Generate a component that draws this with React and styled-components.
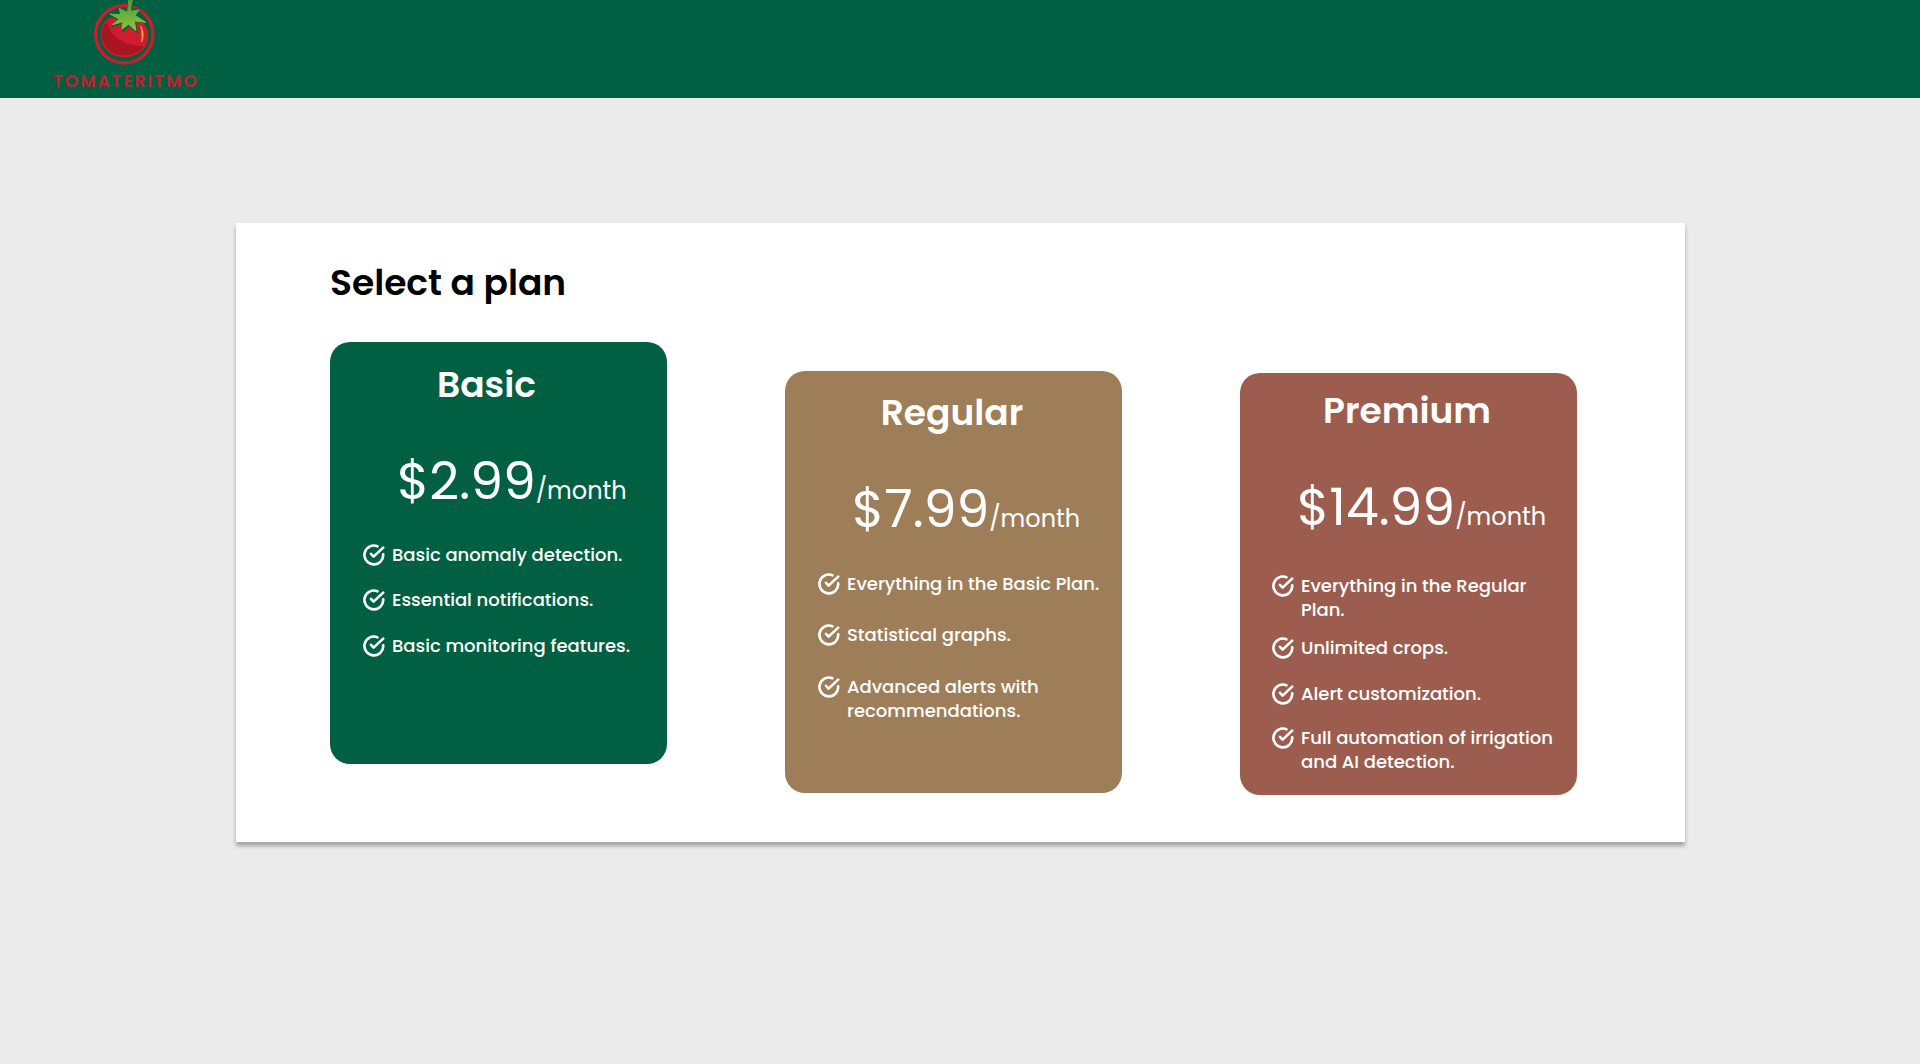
import React from "react";
import styled, { createGlobalStyle } from "styled-components";

const GlobalStyle = createGlobalStyle`
  *, *::before, *::after { box-sizing: border-box; }
  body {
    margin: 0;
    background: #ebebeb;
    color: #000;
    font-family: "Poppins", "Inter", sans-serif;
  }
`;

const Header = styled.header`
  display: flex;
  height: 98px;
  padding-left: 53px;
  background: #006041;
`;

const Brand = styled.a`
  display: flex;
  flex-direction: column;
  align-items: center;
  gap: 4px;
  color: #c41e2f;
  text-decoration: none;
`;

const Wordmark = styled.span`
  margin-right: -2px;
  font-size: 17px;
  font-weight: 600;
  line-height: 20px;
  letter-spacing: 2px;
`;

const Main = styled.main`
  padding: 125px 235px 125px 236px;
`;

const Panel = styled.section`
  padding: 36px 108px 47px 94px;
  background: #fff;
  box-shadow: 0 4px 4px rgba(0, 0, 0, 0.3);
`;

const Heading = styled.h1`
  margin: 0 0 35px;
  font-size: 36px;
  font-weight: 600;
  line-height: 48px;
`;

const Plans = styled.div`
  display: grid;
  grid-template-columns: repeat(3, 1fr);
  align-items: start;
  gap: 118px;
`;

const Card = styled.article`
  min-height: 422px;
  margin-top: ${(p) => p.$drop}px;
  border-radius: 20px;
  background: ${(p) => p.$color};
  color: #fff;
`;

const PlanName = styled.h2`
  margin: 0;
  padding: ${(p) => p.$top}px ${(p) => p.$shift}px 0 0;
  font-size: 36px;
  font-weight: 600;
  line-height: 48px;
  text-align: center;
`;

const Price = styled.p`
  margin: 0;
  padding: 32px 0 0 ${(p) => p.$indent}px;
  font-size: 52px;
  font-weight: 400;
  line-height: 80px;
  white-space: nowrap;
`;

const Period = styled.span`
  font-size: 24px;
`;

const Features = styled.ul`
  margin: 0;
  padding: ${(p) => p.$top}px 16px 16px ${(p) => p.$left}px;
  list-style: none;
`;

const Feature = styled.li`
  display: flex;
  gap: 7px;
  margin-top: ${(p) => p.$space}px;
  font-size: 18px;
  font-weight: 500;
  line-height: 24px;
`;

const Tick = styled.svg`
  flex: none;
  width: 22px;
  height: 24px;
`;

function TickIcon() {
  return (
    <Tick viewBox="0 0 22 24" fill="none" stroke="currentColor" strokeWidth="2.6" strokeLinecap="round" strokeLinejoin="round" aria-hidden="true">
      <path d="M20.2 11.2A9.4 9.4 0 1 1 14.4 3.3" />
      <path d="M8 10.8L10.6 13.6L20.2 4.6" />
    </Tick>
  );
}

function TomatoLogo() {
  return (
    <svg width="65" height="67" viewBox="36 0 195 201" aria-hidden="true">
      <defs>
        <linearGradient id="leaf" x1="0" y1="0" x2="0" y2="1">
          <stop offset="0" stopColor="#4f9a35" />
          <stop offset="1" stopColor="#8cc63f" />
        </linearGradient>
      </defs>
      <circle cx="133" cy="103" r="86" fill="none" stroke="#cf1b2e" strokeWidth="10" />
      <path d="M90 53C70 62 61 85 62 108C64 146 95 172 134 171C174 171 204 145 205 110C206 86 195 66 174 62C145 50 115 46 90 53Z" fill="#d11c2f" />
      <path d="M82 64C66 76 62 100 66 118C74 150 102 166 132 166C160 166 181 155 191 139C137 138 86 110 82 64Z" fill="#a81622" />
      <path d="M182 78C191 92 192 110 185 126C187 109 186 94 182 78Z" fill="#e9a544" stroke="#e9a544" strokeWidth="2" />
      <path d="M146 0H158C155 10 154 19 154 30L176 28L166 42L195 66L164 62L169 93L147 74L130 90L130 66L102 76L116 58L92 46L122 44L118 27L144 36Z" fill="#006041" stroke="#006041" strokeWidth="7" />
      <path d="M146 0H158C153 12 152 22 153 34L178 29L165 46L197 67L163 63L168 92L146 73L126 87L129 65L98 74L117 57L90 42L122 44L117 25L143 37C145 24 144 12 146 0Z" fill="url(#leaf)" stroke="url(#leaf)" strokeWidth="3" />
    </svg>
  );
}

const plans = [
  {
    name: "Basic", price: "$2.99", color: "#006041",
    drop: 0, nameTop: 19, nameShift: 24, indent: 67, listTop: 12, listLeft: 33,
    features: [
      { text: "Basic anomaly detection.", space: 0 },
      { text: "Essential notifications.", space: 21 },
      { text: "Basic monitoring features.", space: 22 },
    ],
  },
  {
    name: "Regular", price: "$7.99", color: "#9e7e58",
    drop: 29, nameTop: 18, nameShift: 3, indent: 67, listTop: 13, listLeft: 33,
    features: [
      { text: "Everything in the Basic Plan.", space: 0 },
      { text: "Statistical graphs.", space: 27 },
      { text: "Advanced alerts with recommendations.", space: 28 },
    ],
  },
  {
    name: "Premium", price: "$14.99", color: "#9c5d4e",
    drop: 31, nameTop: 14, nameShift: 3, indent: 57, listTop: 17, listLeft: 32,
    features: [
      { text: "Everything in the Regular Plan.", space: 0 },
      { text: "Unlimited crops.", space: 14 },
      { text: "Alert customization.", space: 22 },
      { text: "Full automation of irrigation and AI detection.", space: 20 },
    ],
  },
];

function PlanCard({ plan }) {
  return (
    <Card $color={plan.color} $drop={plan.drop}>
      <PlanName $top={plan.nameTop} $shift={plan.nameShift}>{plan.name}</PlanName>
      <Price $indent={plan.indent}>
        {plan.price}
        <Period>/month</Period>
      </Price>
      <Features $top={plan.listTop} $left={plan.listLeft}>
        {plan.features.map(({ text, space }) => (
          <Feature key={text} $space={space}>
            <TickIcon />
            <span>{text}</span>
          </Feature>
        ))}
      </Features>
    </Card>
  );
}

export default function App() {
  return (
    <>
      <GlobalStyle />
      <Header>
        <Brand href="#">
          <TomatoLogo />
          <Wordmark>TOMATERITMO</Wordmark>
        </Brand>
      </Header>
      <Main>
        <Panel>
          <Heading>Select a plan</Heading>
          <Plans>
            {plans.map((plan) => (
              <PlanCard key={plan.name} plan={plan} />
            ))}
          </Plans>
        </Panel>
      </Main>
    </>
  );
}
